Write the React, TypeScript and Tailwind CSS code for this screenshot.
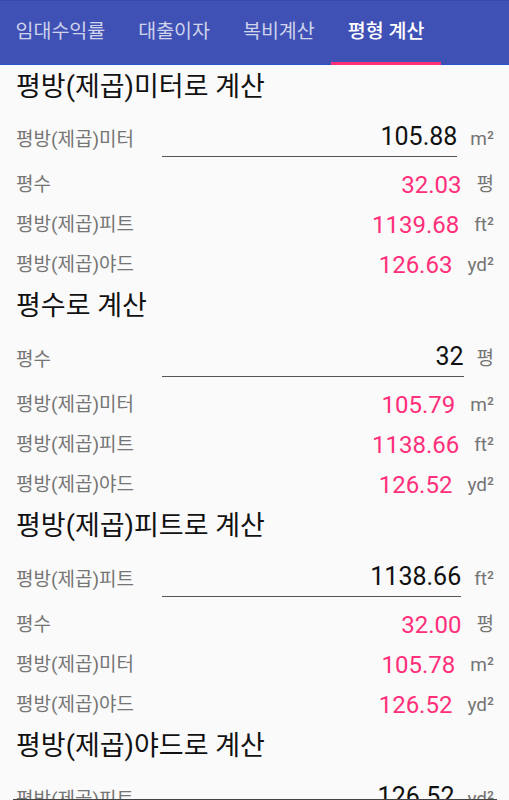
import React from "react";

type OutRow = { label: string; value: string; unit: string };
type Section = { title: string; inLabel: string; inValue: string; inUnit: string; rows: OutRow[] };

const tabs = ["임대수익률", "대출이자", "복비계산", "평형 계산"];

const sections: Section[] = [
  {
    title: "평방(제곱)미터로 계산",
    inLabel: "평방(제곱)미터",
    inValue: "105.88",
    inUnit: "m²",
    rows: [
      { label: "평수", value: "32.03", unit: "평" },
      { label: "평방(제곱)피트", value: "1139.68", unit: "ft²" },
      { label: "평방(제곱)야드", value: "126.63", unit: "yd²" },
    ],
  },
  {
    title: "평수로 계산",
    inLabel: "평수",
    inValue: "32",
    inUnit: "평",
    rows: [
      { label: "평방(제곱)미터", value: "105.79", unit: "m²" },
      { label: "평방(제곱)피트", value: "1138.66", unit: "ft²" },
      { label: "평방(제곱)야드", value: "126.52", unit: "yd²" },
    ],
  },
  {
    title: "평방(제곱)피트로 계산",
    inLabel: "평방(제곱)피트",
    inValue: "1138.66",
    inUnit: "ft²",
    rows: [
      { label: "평수", value: "32.00", unit: "평" },
      { label: "평방(제곱)미터", value: "105.78", unit: "m²" },
      { label: "평방(제곱)야드", value: "126.52", unit: "yd²" },
    ],
  },
  {
    title: "평방(제곱)야드로 계산",
    inLabel: "평방(제곱)피트",
    inValue: "126.52",
    inUnit: "yd²",
    rows: [],
  },
];

function TabBar() {
  return (
    <div className="flex h-[65px] items-stretch border-t border-[#3848a6] border-b border-b-[#2a52cc] bg-[#3F51B5]">
      {tabs.map((t, i) => {
        const active = i === tabs.length - 1;
        return (
          <div
            key={t}
            className={[
              "relative flex items-center px-[16.5px] text-[19.5px]",
              i === 0 ? "-ml-px" : "",
              active ? "font-medium text-white" : "text-white/75",
            ].join(" ")}
          >
            <span className="-mt-px">{t}</span>
            {active ? <div className="absolute bottom-[-1px] left-0 right-0 h-[3px] bg-[#FF2F7A]" /> : null}
          </div>
        );
      })}
    </div>
  );
}

function SectionBlock({ s, first }: { s: Section; first: boolean }) {
  return (
    <div>
      <div className={["flex h-[42px] items-center pl-4 text-[27px] text-[#111]", first ? "pt-[3px]" : ""].join(" ")}>
        {s.title}
      </div>
      <div className="flex h-[58px] items-start pr-[15px]">
        <div className="mt-[21px] w-[162px] shrink-0 pl-4 text-[19px] leading-[24px] text-[#757575]">{s.inLabel}</div>
        <div className="h-[50px] flex-1 border-b border-[#555] pt-[15px] text-right text-[25px] leading-[30px] text-[#111]">
          {s.inValue}
        </div>
        <div className="mt-[20px] ml-[13px] text-[19px] leading-[24px] text-[#757575]">{s.inUnit}</div>
      </div>
      {s.rows.map((r) => (
        <div key={r.label} className="flex h-[40px] items-center pl-4 pr-[15px]">
          <div className="flex-1 text-[19px] text-[#757575]">{r.label}</div>
          <div className="text-[24px] text-[#FF2F7A]">{r.value}</div>
          <div className="ml-[15px] text-[19px] text-[#757575]">{r.unit}</div>
        </div>
      ))}
    </div>
  );
}

export default function App() {
  return (
    <div
      className="relative h-[800px] w-[509px] overflow-hidden bg-[#fafafa]"
      style={{ fontFamily: "Roboto, 'Noto Sans CJK KR', sans-serif" }}
    >
      <TabBar />
      {sections.map((s, i) => (
        <SectionBlock key={s.title} s={s} first={i === 0} />
      ))}
      <div className="absolute bottom-0 left-[13px] right-[12px] h-px bg-[#444]" />
    </div>
  );
}
